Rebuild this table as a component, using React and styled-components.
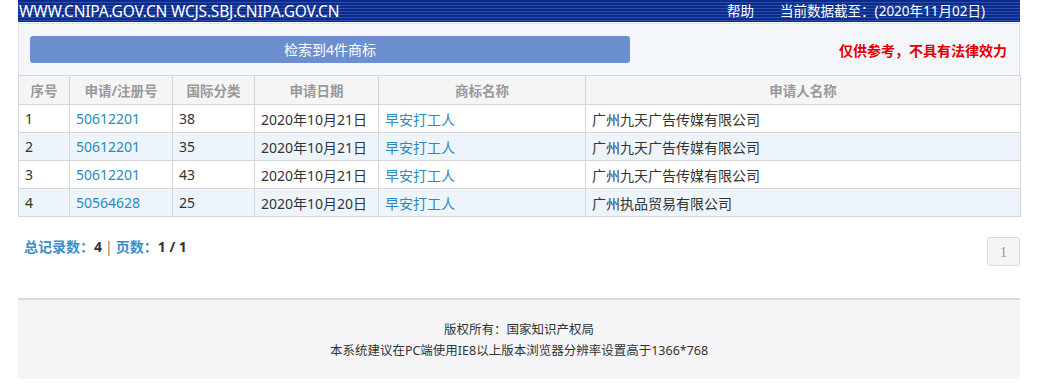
import styled, { createGlobalStyle } from "styled-components";

const GlobalStyle = createGlobalStyle`
  body {
    margin: 0;
    background: #fff;
    font-family: "Noto Sans", "Noto Sans CJK SC", sans-serif;
    font-size: 13px;
    color: #333;
  }
`;

const rows = [
  { no: 1, reg: "50612201", cls: "38", date: "2020年10月21日", name: "早安打工人", owner: "广州九天广告传媒有限公司" },
  { no: 2, reg: "50612201", cls: "35", date: "2020年10月21日", name: "早安打工人", owner: "广州九天广告传媒有限公司" },
  { no: 3, reg: "50612201", cls: "43", date: "2020年10月21日", name: "早安打工人", owner: "广州九天广告传媒有限公司" },
  { no: 4, reg: "50564628", cls: "25", date: "2020年10月20日", name: "早安打工人", owner: "广州执品贸易有限公司" },
];

const columns = [
  { title: "序号", width: 51 },
  { title: "申请/注册号", width: 103 },
  { title: "国际分类", width: 82 },
  { title: "申请日期", width: 124 },
  { title: "商标名称", width: 207 },
  { title: "申请人名称", width: 435 },
];

export default function App() {
  return (
    <>
      <GlobalStyle />
      <Page>
        <TopBar>
          <Site>WWW.CNIPA.GOV.CN WCJS.SBJ.CNIPA.GOV.CN</Site>
          <TopLinks>
            <span>帮助</span>
            <span>当前数据截至：(2020年11月02日)</span>
          </TopLinks>
        </TopBar>
        <Summary>
          <ResultButton>检索到4件商标</ResultButton>
          <Notice>仅供参考，不具有法律效力</Notice>
        </Summary>
        <Table>
          <colgroup>
            {columns.map((c) => (
              <col key={c.title} style={{ width: c.width }} />
            ))}
          </colgroup>
          <thead>
            <tr>
              {columns.map((c) => (
                <Th key={c.title}>{c.title}</Th>
              ))}
            </tr>
          </thead>
          <tbody>
            {rows.map((r) => (
              <Row key={r.no} $striped={r.no % 2 === 0}>
                <Td>{r.no}</Td>
                <Td>
                  <Link>{r.reg}</Link>
                </Td>
                <Td>{r.cls}</Td>
                <Td>{r.date}</Td>
                <Td>
                  <Link>{r.name}</Link>
                </Td>
                <Td>{r.owner}</Td>
              </Row>
            ))}
          </tbody>
        </Table>
        <Pager>
          <Stats>
            总记录数：<Num>4</Num>
            <Sep>|</Sep>
            页数：<Num>1 / 1</Num>
          </Stats>
          <PageButton>1</PageButton>
        </Pager>
      </Page>
      <Footer>
        <p>版权所有：国家知识产权局</p>
        <p>本系统建议在PC端使用IE8以上版本浏览器分辨率设置高于1366*768</p>
      </Footer>
    </>
  );
}

const Page = styled.div`
  width: 1002px;
  margin-left: 18px;
`;

const TopBar = styled.div`
  display: flex;
  justify-content: space-between;
  align-items: center;
  height: 22px;
  padding: 0 35px 0 1px;
  background: repeating-linear-gradient(
    to bottom,
    #0a2b8c 0px,
    #0a2b8c 2px,
    #2c4ea8 2px,
    #2c4ea8 3px
  );
  color: #fff;
  font-size: 15.5px;
  line-height: 22px;
`;

const Site = styled.span`
  letter-spacing: -0.2px;
`;

const TopLinks = styled.div`
  display: flex;
  gap: 26px;
  font-size: 13.5px;
`;

const Summary = styled.div`
  display: flex;
  justify-content: space-between;
  align-items: center;
  height: 52px;
  margin-top: 1px;
  padding: 0 12px 0 11px;
  background: #f3f6fa;
  border: 1px solid #dfe3e8;
  border-bottom: none;
  box-sizing: border-box;
`;

const ResultButton = styled.div`
  width: 600px;
  height: 27px;
  line-height: 27px;
  text-align: center;
  background: #6b8fcf;
  border-radius: 3px;
  color: #fff;
  font-size: 14px;
`;

const Notice = styled.span`
  color: #e00000;
  font-weight: bold;
  font-size: 14px;
`;

const Table = styled.table`
  width: 100%;
  border-collapse: collapse;
  table-layout: fixed;
`;

const Th = styled.th`
  height: 28px;
  padding: 0;
  background: #f5f5f5;
  border: 1px solid #d6d6d6;
  color: #999;
  font-weight: bold;
  font-size: 13.5px;
  text-align: center;
`;

const Row = styled.tr`
  background: ${(p) => (p.$striped ? "#eef4fb" : "#fff")};
`;

const Td = styled.td`
  height: 27px;
  padding: 0 6px;
  border: 1px solid #d6d6d6;
  font-size: 14px;
  white-space: nowrap;
`;

const Link = styled.span`
  color: #2a8ac0;
`;

const Pager = styled.div`
  display: flex;
  justify-content: space-between;
  align-items: flex-start;
  padding: 19px 0 31px 6px;
  height: 31px;
`;

const Stats = styled.div`
  color: #3b8dc8;
  font-weight: bold;
  font-size: 14px;
  line-height: 22px;
`;

const Num = styled.span`
  color: #333;
`;

const Sep = styled.span`
  color: #8a7a60;
  font-weight: normal;
  margin: 0 3px;
`;

const PageButton = styled.div`
  width: 33px;
  height: 29px;
  line-height: 29px;
  margin-top: 1px;
  text-align: center;
  background: #f5f5f5;
  border: 1px solid #ddd;
  border-radius: 3px;
  color: #999;
  font-family: "Liberation Serif", serif;
  font-size: 15px;
  box-sizing: border-box;
`;

const Footer = styled.div`
  width: 1002px;
  margin-left: 18px;
  border-top: 2px solid #d8d8da;
  background: #f5f5f7;
  padding: 19px 0 18px;
  text-align: center;
  font-size: 12.5px;
  color: #333;

  p {
    margin: 0;
    line-height: 21px;
  }
`;
